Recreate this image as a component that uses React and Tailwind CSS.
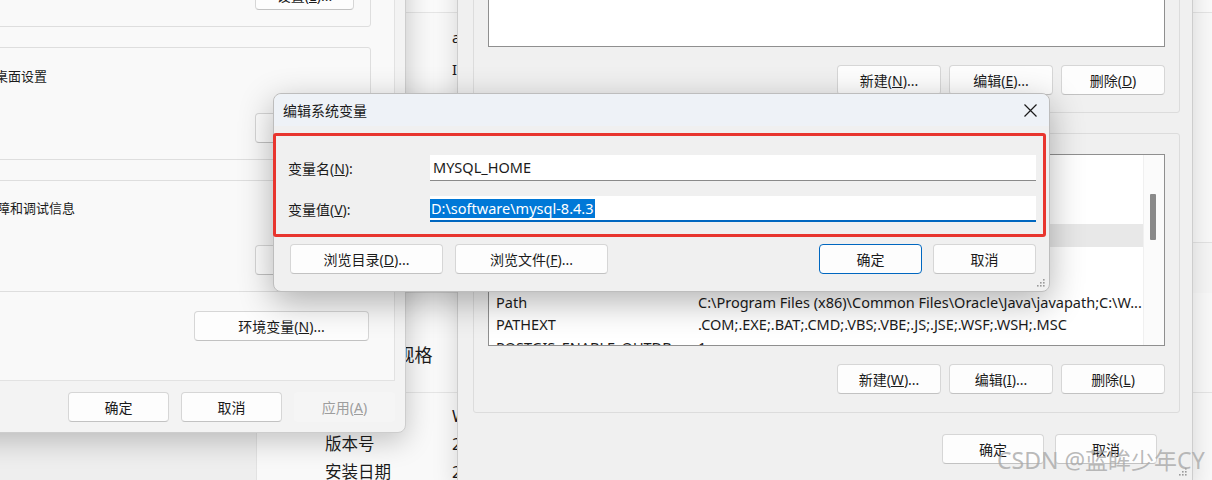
import React from 'react'

function Btn({ children, className = '', primary, disabled }) {
  return (
    <div
      className={`flex h-[30px] shrink-0 items-center justify-center rounded-[4px] text-[14px] ${
        disabled
          ? 'bg-[#f5f5f5] text-[#9d9d9d]'
          : primary
          ? 'border border-[#0067c0] bg-[#fdfdfd] text-[#1b1b1b]'
          : 'border border-[#d6d6d6] border-b-[#c2c2c2] bg-[#fdfdfd] text-[#1b1b1b]'
      } ${className}`}
    >
      {children}
    </div>
  )
}

function Grip({ className = '' }) {
  return (
    <svg width="10" height="10" viewBox="0 0 10 10" className={className}>
      {[
        [8, 2],
        [8, 5],
        [5, 5],
        [8, 8],
        [5, 8],
        [2, 8]
      ].map(([x, y]) => (
        <rect key={`${x}-${y}`} x={x - 1} y={y - 1} width="1.6" height="1.6" fill="#9a9a9a" />
      ))}
    </svg>
  )
}

const sysVars = [
  { name: 'ComSpec', value: 'C:\\Windows\\system32\\cmd.exe' },
  { name: 'DriverData', value: 'C:\\Windows\\System32\\Drivers\\DriverData' },
  { name: 'JAVA_HOME', value: 'D:\\software\\jdk-17' },
  { name: 'MYSQL_HOME', value: 'D:\\software\\mysql-8.4.3', selected: true },
  { name: 'NUMBER_OF_PROCESSORS', value: '16' },
  { name: 'OS', value: 'Windows_NT' },
  { name: 'Path', value: 'C:\\Program Files (x86)\\Common Files\\Oracle\\Java\\javapath;C:\\W...' },
  { name: 'PATHEXT', value: '.COM;.EXE;.BAT;.CMD;.VBS;.VBE;.JS;.JSE;.WSF;.WSH;.MSC' },
  { name: 'POSTGIS_ENABLE_OUTDB', value: '1' }
]

function SettingsBackground() {
  return (
    <div className="absolute inset-0 flex bg-[#f3f3f3] text-[#1b1b1b]">
      <div className="w-[257px] shrink-0 border-r border-[#e2e2e2] bg-[#eeeeee]" />
      <div className="flex flex-1 flex-col">
        <div className="h-[13px] shrink-0 border-b border-[#e5e5e5] bg-[#fbfbfb]" />
        <div className="flex h-[280px] shrink-0 border-b border-[#e5e5e5] bg-[#f9f9f9]">
          <div className="flex-1 pt-[8px] text-[15px]">
            <div className="flex h-[32px] items-center pl-[68px]">
              <span className="w-[127px] shrink-0">设备名称</span>
              <span>admin-PC</span>
            </div>
            <div className="flex h-[32px] items-center pl-[68px]">
              <span className="w-[127px] shrink-0">处理器</span>
              <span>Intel(R) Core(TM) i7</span>
            </div>
          </div>
          <div className="w-[40px] shrink-0 pt-[229px]">
            <div className="h-[68px] border-y border-[#e3e3e3] bg-[#f6f6f6]" />
          </div>
        </div>
        <div className="h-[100px] shrink-0 border-b border-[#e5e5e5] bg-[#f9f9f9] pl-[58px] pt-[50px] text-[18px] leading-[24px]">
          Windows 规格
        </div>
        <div className="shrink-0 bg-[#f9f9f9] pt-[9px] text-[16.5px]">
          {[
            ['版本', 'Windows 11 专业版'],
            ['版本号', '24H2'],
            ['安装日期', '2024/11/20']
          ].map(([k, v]) => (
            <div key={k} className="flex h-[28px] items-center pl-[68px]">
              <span className="w-[127px] shrink-0">{k}</span>
              <span>{v}</span>
            </div>
          ))}
        </div>
      </div>
    </div>
  )
}

function SystemPropsWindow() {
  return (
    <div className="absolute left-[-145px] top-[-60px] flex h-[493px] w-[551px] flex-col rounded-br-[8px] border border-[#cdcdcd] bg-[#f3f3f3] px-[10px] pb-[10px] text-[13px] text-[#1b1b1b] shadow-[0_8px_28px_rgba(0,0,0,0.22)]">
      <div className="flex flex-1 flex-col border border-[#e2e2e2] bg-[#f9f9f9] pl-[14px] pr-[23px] pt-[8px]">
        <div className="flex h-[77px] flex-col items-end justify-end rounded-[3px] border border-[#dedede] pb-[16px] pr-[16px]">
          <Btn className="w-[99px]">
            设置(<span className="underline">E</span>)...
          </Btn>
        </div>
        <div className="mt-[20px] flex h-[113px] flex-col rounded-[3px] border border-[#dedede] pl-[9px] pr-[16px] pt-[19px]">
          <div className="h-[18px] leading-[18px]">与登录帐户相关的桌面设置</div>
          <Btn className="mt-[28px] w-[99px] self-end">
            设置(<span className="underline">E</span>)...
          </Btn>
        </div>
        <div className="mt-[20px] flex h-[112px] flex-col rounded-[3px] border border-[#dedede] pl-[11px] pr-[16px] pt-[18px]">
          <div className="h-[18px] leading-[18px]">系统启动、系统故障和调试信息</div>
          <Btn className="mt-[28px] w-[99px] self-end">
            设置(<span className="underline">T</span>)...
          </Btn>
        </div>
        <Btn className="mr-[2px] mt-[19px] w-[175px] self-end">
          环境变量(<span className="underline">N</span>)...
        </Btn>
      </div>
      <div className="mt-[11px] flex h-[30px] justify-end gap-[12px]">
        <Btn className="w-[101px]">确定</Btn>
        <Btn className="w-[101px]">取消</Btn>
        <Btn className="w-[101px]" disabled>
          应用(<span className="underline">A</span>)
        </Btn>
      </div>
    </div>
  )
}

function EnvWindow() {
  return (
    <div className="absolute left-[457px] top-[-40px] flex h-[522px] w-[736px] flex-col border-x border-[#cdcdcd] bg-[#f0f0f0] pl-[15px] pr-[12px] pt-[10px] text-[14px] text-[#1b1b1b] shadow-[0_6px_24px_rgba(0,0,0,0.15)]">
      <div className="flex h-[143px] flex-col rounded-[3px] border border-[#dcdcdc] px-[14px] pb-[17px]">
        <div className="flex-1 border border-[#8f8f8f] bg-white" />
        <div className="mt-[18px] flex h-[30px] justify-end gap-[8px]">
          <Btn className="w-[104px]">
            新建(<span className="underline">N</span>)...
          </Btn>
          <Btn className="w-[104px]">
            编辑(<span className="underline">E</span>)...
          </Btn>
          <Btn className="w-[104px]">
            删除(<span className="underline">D</span>)
          </Btn>
        </div>
      </div>
      <div className="mt-[20px] flex h-[280px] flex-col rounded-[3px] border border-[#dcdcdc] px-[14px] pt-[20px]">
        <div className="flex h-[192px] overflow-hidden border border-[#8f8f8f] bg-white">
          <div className="flex-1 overflow-hidden pt-[1.5px] text-[14.5px]">
            {sysVars.map((v) => (
              <div
                key={v.name}
                className={`flex h-[22.5px] items-center whitespace-nowrap ${v.selected ? 'bg-[#e8e8e8]' : ''}`}
              >
                <span className="w-[209px] shrink-0 pl-[7px]">{v.name}</span>
                <span>{v.value}</span>
              </div>
            ))}
          </div>
          <div className="relative w-[21px] shrink-0 border-l border-[#f0f0f0] bg-[#fbfbfb]">
            <div className="absolute left-[6px] top-[39px] h-[46px] w-[6px] rounded-[1px] bg-[#8a8a8a]" />
          </div>
        </div>
        <div className="mt-[18px] flex h-[30px] justify-end gap-[8px]">
          <Btn className="w-[104px]">
            新建(<span className="underline">W</span>)...
          </Btn>
          <Btn className="w-[104px]">
            编辑(<span className="underline">I</span>)...
          </Btn>
          <Btn className="w-[104px]">
            删除(<span className="underline">L</span>)
          </Btn>
        </div>
      </div>
      <div className="mt-[21px] flex h-[30px] justify-end gap-[11px] pr-[23px]">
        <Btn className="w-[102px]">确定</Btn>
        <Btn className="w-[102px]">取消</Btn>
      </div>
      <Grip className="absolute bottom-[5px] right-[4px]" />
    </div>
  )
}

function EditDialog() {
  return (
    <div className="absolute left-[273px] top-[93px] flex h-[199px] w-[777px] flex-col rounded-[8px] border border-[#bdbdbd] bg-[#f0f0f0] text-[#1b1b1b] shadow-[0_10px_34px_rgba(0,0,0,0.3)]">
      <div className="flex h-[32px] items-center justify-between rounded-t-[8px] bg-[#eef2f7] pl-[9px] pr-[12px] text-[14px]">
        <span>编辑系统变量</span>
        <svg width="13" height="13" viewBox="0 0 13 13">
          <path d="M0.5 0.5 L12.5 12.5 M12.5 0.5 L0.5 12.5" stroke="#1b1b1b" strokeWidth="1.2" />
        </svg>
      </div>
      <div className="ml-[-1px] mr-[3px] mt-[7px] h-[104px] rounded-[3px] border-[3px] border-[#e8352e] pl-[12px] pr-[7px] pt-[19px]">
        <div className="flex h-[26px] items-center">
          <span className="w-[142px] shrink-0 text-[14px]">
            变量名(<span className="underline">N</span>):
          </span>
          <div className="flex h-[26px] flex-1 items-center border-b border-[#8a8a8a] bg-white pl-[3px] text-[14.5px]">
            MYSQL_HOME
          </div>
        </div>
        <div className="mt-[15px] flex h-[26px] items-center">
          <span className="w-[142px] shrink-0 text-[14px]">
            变量值(<span className="underline">V</span>):
          </span>
          <div className="flex h-[26px] flex-1 items-center border-b-2 border-[#0067c0] bg-white text-[14.5px]">
            <span className="bg-[#0078d7] px-[1px] leading-[19px] text-white">D:\software\mysql-8.4.3</span>
          </div>
        </div>
      </div>
      <div className="mt-[7px] flex h-[30px] pl-[16px] pr-[13px]">
        <Btn className="w-[153px]">
          浏览目录(<span className="underline">D</span>)...
        </Btn>
        <Btn className="ml-[12px] w-[153px]">
          浏览文件(<span className="underline">F</span>)...
        </Btn>
        <div className="flex-1" />
        <Btn className="w-[103px]" primary>
          确定
        </Btn>
        <Btn className="ml-[11px] w-[103px]">取消</Btn>
      </div>
      <Grip className="absolute bottom-[3px] right-[3px]" />
    </div>
  )
}

export default function App() {
  return (
    <div className="relative h-[480px] w-[1212px] overflow-hidden bg-[#f3f3f3] font-['Noto_Sans','Noto_Sans_CJK_SC',sans-serif]">
      <SettingsBackground />
      <SystemPropsWindow />
      <EnvWindow />
      <EditDialog />
      <div className="absolute left-[997px] top-[444px] whitespace-nowrap text-[23px] leading-[32px] text-[#a8a8a8]/80">
        CSDN @蓝眸少年CY
      </div>
    </div>
  )
}
